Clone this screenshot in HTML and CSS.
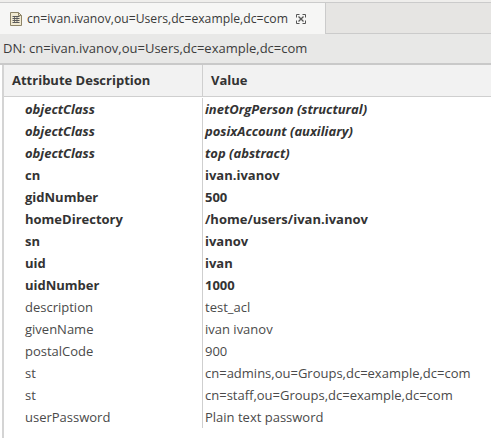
FILE: index.html
```html
<!DOCTYPE html>
<html lang="en">

<head>
    <meta charset="UTF-8">
    <title>Entry editor</title>
    <link rel="stylesheet" href="styles.css">
</head>

<body>
    <div class="tabbar">
        <div class="tab">
            <svg class="tab-icon" width="14" height="16" viewBox="0 0 14 16">
                <path d="M1.5 1.5h8l3 3v10h-11z" fill="#f1ead2" stroke="#8d8468"/>
                <path d="M9.5 1.5v3h3" fill="none" stroke="#8d8468"/>
                <path d="M3.5 5.5h7M3.5 7.5h7M3.5 9.5h7M3.5 11.5h7" stroke="#5a5a5a"/>
                <path d="M5.5 5v7M8 5v7" stroke="#5a5a5a" stroke-width="0.8"/>
            </svg>
            <span class="tab-title">cn=ivan.ivanov,ou=Users,dc=example,dc=com</span>
            <svg class="tab-close" width="10" height="10" viewBox="0 0 10 10">
                <path d="M0.5 0.5h3M0.5 0.5v3M9.5 0.5h-3M9.5 0.5v3M0.5 9.5h3M0.5 9.5v-3M9.5 9.5h-3M9.5 9.5v-3" stroke="#555" fill="none"/>
                <path d="M2.5 2.5l5 5M7.5 2.5l-5 5" stroke="#555" stroke-width="1.3"/>
            </svg>
        </div>
        <div class="tab-rest"></div>
    </div>

    <div class="dn-bar">DN: cn=ivan.ivanov,ou=Users,dc=example,dc=com</div>

    <div class="table">
        <div class="head">
            <div class="cell">Attribute Description</div>
            <div class="cell">Value</div>
        </div>
        <div class="rows">
            <div class="row must oc"><div class="cell">objectClass</div><div class="cell">inetOrgPerson (structural)</div></div>
            <div class="row must oc"><div class="cell">objectClass</div><div class="cell">posixAccount (auxiliary)</div></div>
            <div class="row must oc"><div class="cell">objectClass</div><div class="cell">top (abstract)</div></div>
            <div class="row must"><div class="cell">cn</div><div class="cell">ivan.ivanov</div></div>
            <div class="row must"><div class="cell">gidNumber</div><div class="cell">500</div></div>
            <div class="row must"><div class="cell">homeDirectory</div><div class="cell">/home/users/ivan.ivanov</div></div>
            <div class="row must"><div class="cell">sn</div><div class="cell">ivanov</div></div>
            <div class="row must"><div class="cell">uid</div><div class="cell">ivan</div></div>
            <div class="row must"><div class="cell">uidNumber</div><div class="cell">1000</div></div>
            <div class="row"><div class="cell">description</div><div class="cell">test_acl</div></div>
            <div class="row"><div class="cell">givenName</div><div class="cell">ivan ivanov</div></div>
            <div class="row"><div class="cell">postalCode</div><div class="cell">900</div></div>
            <div class="row"><div class="cell">st</div><div class="cell">cn=admins,ou=Groups,dc=example,dc=com</div></div>
            <div class="row"><div class="cell">st</div><div class="cell">cn=staff,ou=Groups,dc=example,dc=com</div></div>
            <div class="row"><div class="cell">userPassword</div><div class="cell">Plain text password</div></div>
        </div>
    </div>
</body>

</html>
```

FILE: styles.css
```css
* {
    margin: 0px;
    padding: 0px;
    box-sizing: border-box;
}

body {
    width: 491px;
    height: 438px;
    overflow: hidden;
    background-color: #ffffff;
    font-family: "Open Sans", "Noto Sans", sans-serif;
    font-size: 13px;
    color: #3c3c3c;
}

.tabbar {
    display: flex;
    height: 34px;
    padding-top: 2px;
    background-color: #efeeec;
}

.tab {
    display: flex;
    align-items: center;
    width: 325px;
    padding-left: 9px;
    border-top: 1px solid #cbcbcb;
    background-color: #f6f6f5;
    font-size: 12.2px;
}

.tab-icon {
    margin-right: 4px;
}

.tab-title {
    color: #3a3a3a;
}

.tab-close {
    margin-left: 8px;
}

.tab-rest {
    flex: 1;
    border: 1px solid #cbcbcb;
    border-right: none;
    background-color: #e6e5e3;
}

.dn-bar {
    height: 31px;
    padding-left: 3px;
    line-height: 29px;
    background-color: #e8e8e7;
    border-bottom: 2px solid #c9c9c9;
}

.table {
    margin-left: 2px;
    border-left: 2px solid #d4d4d4;
    height: 374px;
}

.head {
    display: flex;
    height: 32px;
    background-color: #f2f2f2;
    border-bottom: 1px solid #cfcfcf;
    font-weight: bold;
    color: #333333;
}

.head .cell {
    line-height: 31px;
    padding-left: 8px;
}

.head .cell:first-child {
    width: 199px;
    border-right: 1px solid #cfcfcf;
}

.rows {
    padding-top: 1px;
}

.row {
    display: flex;
    height: 22px;
    line-height: 22px;
    color: #4a4a4a;
}

.row .cell:first-child {
    width: 199px;
    padding-left: 21px;
    border-right: 1px solid #cfcfcf;
}

.row .cell:last-child {
    padding-left: 2px;
}

.row.must {
    font-weight: bold;
    color: #333333;
}

.row.oc {
    font-style: italic;
}
```
